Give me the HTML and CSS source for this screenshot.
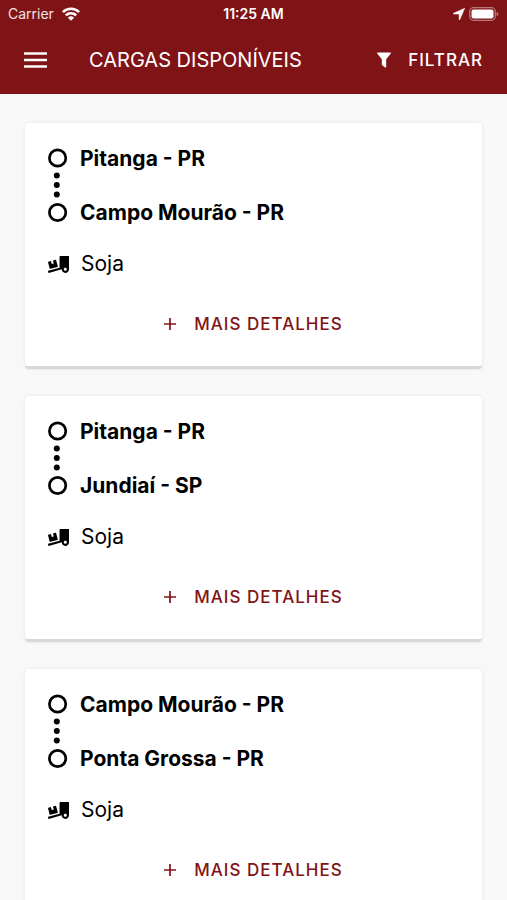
FILE: index.html
```html
<!DOCTYPE html>
<html lang="pt-BR">
<head>
<meta charset="utf-8">
<meta name="viewport" content="width=device-width, initial-scale=1">
<title>Cargas disponíveis</title>
<link rel="stylesheet" href="styles.css">
</head>
<body>
<svg class="defs" aria-hidden="true">
  <symbol id="truck" viewBox="0 0 640 512"><path d="M50.2 375.6c2.3 8.5 11.1 13.6 19.6 11.3l216.4-58c8.5-2.3 13.6-11.1 11.3-19.6l-49.7-185.5c-2.3-8.5-11.1-13.6-19.6-11.3L151 133.3l24.8 92.7-61.8 16.5-24.8-92.7-77.3 20.7C3.4 172.8-1.7 181.6.6 190.1l49.6 185.5zM384 0c-17.7 0-32 14.3-32 32v323.6L5.9 450c-4.3 1.2-6.8 5.6-5.6 9.8l12.6 46.3c1.2 4.3 5.6 6.8 9.8 5.6l393.7-107.4C418.8 464.1 467.6 512 528 512c61.9 0 112-50.1 112-112V0H384zm144 448c-26.5 0-48-21.5-48-48s21.5-48 48-48 48 21.5 48 48-21.5 48-48 48z"/></symbol>
  <symbol id="route" viewBox="0 0 20 76"><g fill="none" stroke="#000" stroke-width="2.7"><circle cx="9.600" cy="11" r="8.2"/><circle cx="9.600" cy="65.500" r="8.2"/></g><circle cx="8.800" cy="28.500" r="3"/><circle cx="8.800" cy="38" r="3"/><circle cx="8.800" cy="47.500" r="3"/></symbol>
  <symbol id="plus" viewBox="0 0 12 12"><path d="M6 0v12M0 6h12" fill="none" stroke="currentColor" stroke-width="1.700"/></symbol>
</svg>
<header class="header">
  <div class="status">
    <div class="carrier">
      <span>Carrier</span>
      <svg width="18" height="14" viewBox="0 0 18 14" aria-hidden="true"><g fill="none" stroke="#fff" stroke-width="2.600"><path d="M.9 5.100a11.600 11.600 0 0 1 16.200 0"/><path d="M3.800 8.400a7.500 7.500 0 0 1 10.400 0"/></g><path d="M5.900 10.700a4.500 4.500 0 0 1 6.200 0L9 13.800z" fill="#fff"/></svg>
    </div>
    <span class="time">11:25 AM</span>
    <div class="indicators">
      <svg width="12" height="12" viewBox="0 0 12 12" aria-hidden="true"><path d="M11.700.3 6.900 11.400a.4.4 0 0 1-.8 0V6H.7a.4.4 0 0 1-.1-.8z" fill="currentColor" stroke="currentColor" stroke-width=".5"/></svg>
      <svg width="30" height="14" viewBox="0 0 30 14" aria-hidden="true"><rect x=".7" y=".7" width="25.600" height="12.600" rx="4" fill="none" stroke="#b8787b" stroke-width="1.300"/><rect x="2.500" y="2.500" width="22" height="9" rx="2" fill="currentColor"/><path d="M27.600 4.800q2 .8 2 2.200t-2 2.200z" fill="#b8787b"/></svg>
    </div>
  </div>
  <div class="toolbar">
    <button class="menu" type="button" aria-label="Menu"><svg width="23" height="16" viewBox="0 0 23 16" aria-hidden="true"><path d="M0 1.500h23M0 8h23M0 14.500h23" stroke="currentColor" stroke-width="2.300"/></svg></button>
    <h1 class="title">CARGAS DISPONÍVEIS</h1>
    <button class="filter" type="button"><svg width="14" height="16" viewBox="0 0 14 16" aria-hidden="true"><path d="M.6.500h12.800q.8.300.4 1.100L9.200 7.300V15q-.3.900-1.100.5L5.100 13.200q-.3-.3-.3-.7V7.300L.2 1.600Q-.2.800.6.500z" fill="currentColor"/></svg><span>FILTRAR</span></button>
  </div>
</header>
<main class="list">
  <article class="card">
    <div class="route">
      <svg class="track" aria-hidden="true"><use href="#route"/></svg>
      <div class="cities"><span>Pitanga - PR</span><span>Campo Mourão - PR</span></div>
    </div>
    <div class="cargo"><svg class="truck" aria-hidden="true"><use href="#truck"/></svg><span>Soja</span></div>
    <button class="details" type="button"><svg class="plus" aria-hidden="true"><use href="#plus"/></svg><span>MAIS DETALHES</span></button>
  </article>
  <article class="card">
    <div class="route">
      <svg class="track" aria-hidden="true"><use href="#route"/></svg>
      <div class="cities"><span>Pitanga - PR</span><span>Jundiaí - SP</span></div>
    </div>
    <div class="cargo"><svg class="truck" aria-hidden="true"><use href="#truck"/></svg><span>Soja</span></div>
    <button class="details" type="button"><svg class="plus" aria-hidden="true"><use href="#plus"/></svg><span>MAIS DETALHES</span></button>
  </article>
  <article class="card">
    <div class="route">
      <svg class="track" aria-hidden="true"><use href="#route"/></svg>
      <div class="cities"><span>Campo Mourão - PR</span><span>Ponta Grossa - PR</span></div>
    </div>
    <div class="cargo"><svg class="truck" aria-hidden="true"><use href="#truck"/></svg><span>Soja</span></div>
    <button class="details" type="button"><svg class="plus" aria-hidden="true"><use href="#plus"/></svg><span>MAIS DETALHES</span></button>
  </article>
</main>
</body>
</html>
```
FILE: styles.css
```css
* { box-sizing: border-box; }

html { scrollbar-width: none; }

body {
  margin: 0;
  background: #f8f8f8;
  color: #000;
  font-family: Inter, "Liberation Sans", sans-serif;
}

button {
  border: 0;
  padding: 0;
  background: none;
  color: inherit;
  font: inherit;
  display: flex;
  align-items: center;
}

.defs { display: none; }

.header {
  background: #801316;
  color: #fff;
  padding-bottom: 8px;
}

.status {
  display: grid;
  grid-template-columns: 1fr auto 1fr;
  align-items: center;
  height: 28px;
  padding: 0 8px;
  font-size: 14px;
  line-height: 20px;
}

.carrier { display: flex; align-items: center; gap: 8px; color: #f3e4e4; }

.time { font-weight: 600; }

.indicators {
  display: flex;
  align-items: center;
  justify-content: flex-end;
  gap: 4px;
}

.toolbar {
  display: flex;
  align-items: center;
  height: 58px;
  padding: 6px 24px 0;
}

.menu { margin-right: 42px; }

.title {
  flex: 1;
  margin: 0;
  font-size: 20px;
  line-height: 28px;
  font-weight: 400;
}

.filter {
  gap: 17px;
  font-size: 17px;
  line-height: 24px;
  font-weight: 500;
  letter-spacing: 1px;
}

.list {
  display: grid;
  gap: 27px;
  padding: 29px 25px;
}

.card {
  padding: 24px 23px 30px;
  background: #fff;
  border-bottom: 3px solid #d8d8d8;
  border-radius: 4px;
  box-shadow: 0 0 3px rgba(0, 0, 0, 0.1);
}

.route { display: flex; gap: 12px; }

.track { width: 20px; height: 76px; }

.cities {
  display: grid;
  gap: 30px;
  font-size: 21px;
  line-height: 24px;
  font-weight: 700;
}

.cargo {
  display: flex;
  align-items: center;
  gap: 12px;
  margin-top: 25px;
  font-size: 21px;
  line-height: 28px;
}

.truck { width: 21px; height: 17px; }

.details {
  gap: 18px;
  margin: 34px auto 0;
  color: #801316;
  font-size: 17px;
  line-height: 24px;
  font-weight: 500;
  letter-spacing: 1px;
}

.plus { width: 12px; height: 12px; }
```
